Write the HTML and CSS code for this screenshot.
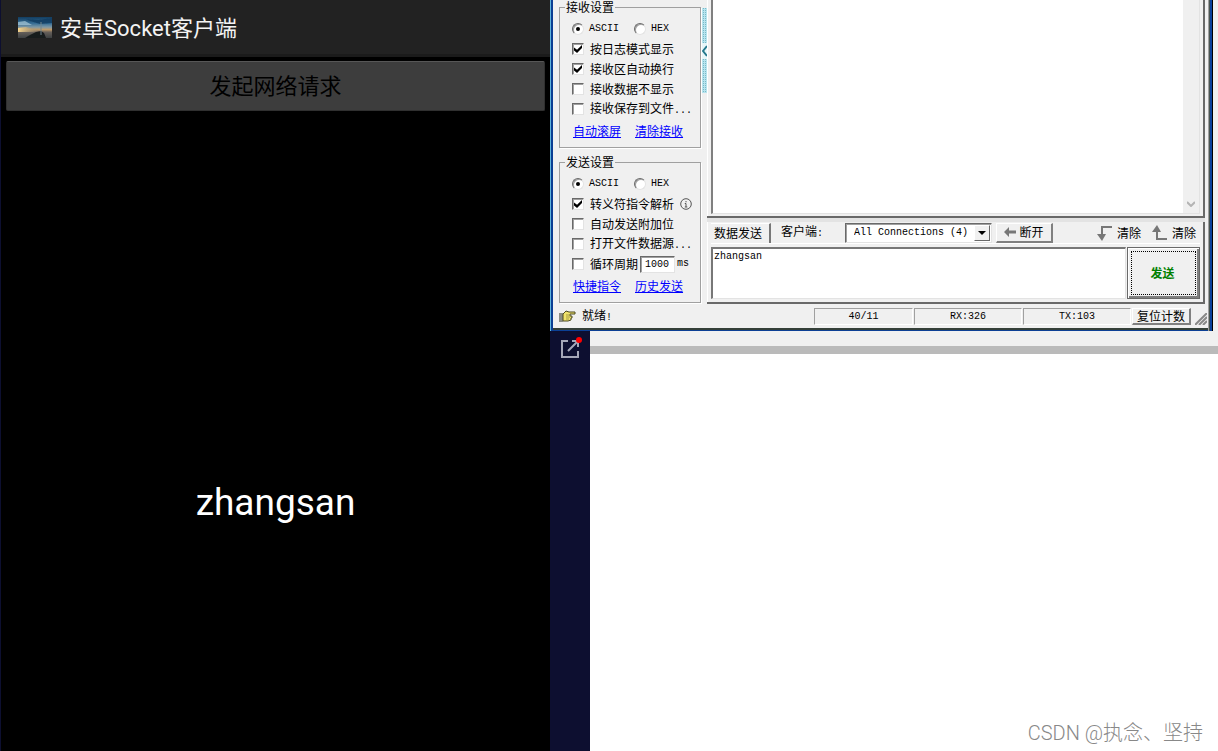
FILE: index.html
```html
<!DOCTYPE html>
<html lang="zh-CN">
<head>
<meta charset="utf-8">
<title>安卓Socket客户端</title>
<link rel="stylesheet" href="styles.css">
</head>
<body>
<div class="screen">
  <section class="phone">
    <header class="app-bar">
      <svg class="app-icon" viewBox="0 0 34 21" aria-hidden="true">
        <defs>
          <linearGradient id="sky" x1="0" y1="0" x2="0" y2="1">
            <stop offset="0" stop-color="#123d60"/><stop offset="0.3" stop-color="#356c94"/>
            <stop offset="0.48" stop-color="#7d98a6"/><stop offset="0.6" stop-color="#c09a68"/>
            <stop offset="0.72" stop-color="#66605a"/><stop offset="1" stop-color="#3c4042"/>
          </linearGradient>
          <linearGradient id="glow"><stop offset="0" stop-color="#f8d68e"/><stop offset="1" stop-color="#7b7468" stop-opacity=".2"/></linearGradient>
          <filter id="soft" x="0" y="0" width="1" height="1"><feGaussianBlur stdDeviation="0.7"/></filter>
        </defs>
        <rect width="34" height="21" fill="url(#sky)"/>
        <g filter="url(#soft)">
          <path d="M0 11 8 10 15 12 24 13 15 15 0 15z" fill="url(#glow)"/>
          <path d="M8 2 20 3 34 1v5L22 7 12 4z" fill="#123c60" opacity=".8"/>
          <path d="M0 5 7 4 14 8 6 8 0 8z" fill="#a9cbd9" opacity=".7"/>
          <path d="M7 21 12 18 18 15 23 14 26 16 28 21z" fill="#171a1c"/>
          <path d="M23 5v13" stroke="#70858c" fill="none"/>
        </g>
      </svg>
      <h1 class="app-title">安卓Socket客户端</h1>
    </header>
    <button class="request-button" type="button">发起网络请求</button>
    <p class="reply">zhangsan</p>
  </section>

  <div class="desktop">
    <div class="window-row">
      <main class="window">
        <div class="work">
          <aside class="settings">
            <fieldset class="group">
              <legend>接收设置</legend>
              <div class="radios">
                <label class="option mono"><input type="radio" name="rx" checked>ASCII</label>
                <label class="option mono"><input type="radio" name="rx">HEX</label>
              </div>
              <label class="option"><input type="checkbox" checked>按日志模式显示</label>
              <label class="option"><input type="checkbox" checked>接收区自动换行</label>
              <label class="option"><input type="checkbox">接收数据不显示</label>
              <label class="option"><input type="checkbox"><span>接收保存到文件<span class="mono">...</span></span></label>
              <div class="links"><a href="#">自动滚屏</a><a href="#">清除接收</a></div>
            </fieldset>
            <fieldset class="group">
              <legend>发送设置</legend>
              <div class="radios">
                <label class="option mono"><input type="radio" name="tx" checked>ASCII</label>
                <label class="option mono"><input type="radio" name="tx">HEX</label>
              </div>
              <label class="option"><input type="checkbox" checked>转义符指令解析
                <svg class="info" viewBox="0 0 12 12" aria-hidden="true"><circle cx="6" cy="6" r="5.3"/><path d="M6 3v1.3M4.8 5.5H6V9M4.8 9h2.5"/></svg>
              </label>
              <label class="option"><input type="checkbox">自动发送附加位</label>
              <label class="option"><input type="checkbox"><span>打开文件数据源<span class="mono">...</span></span></label>
              <div class="cycle">
                <label class="option"><input type="checkbox">循环周期</label>
                <input class="period mono" type="text" value="1000" aria-label="循环周期毫秒"><span class="mono">ms</span>
              </div>
              <div class="links"><a href="#">快捷指令</a><a href="#">历史发送</a></div>
            </fieldset>
          </aside>

          <button class="splitter" type="button" aria-label="收起">
            <span class="dots"></span>
            <svg viewBox="0 0 5 12" aria-hidden="true"><path d="M5 1 1 6l4 5"/></svg>
            <span class="dots"></span>
          </button>

          <div class="panels">
            <section class="receive">
              <div class="receive-box">
                <textarea class="log mono" aria-label="接收区"></textarea>
                <div class="scroll"><svg viewBox="0 0 8 6" aria-hidden="true"><path d="M0 1 4 5l4-4"/></svg></div>
              </div>
            </section>
            <section class="send">
              <div class="toolbar">
                <span class="tab">数据发送</span>
                <label class="client-label" for="client">客户端<span class="mono">:</span></label>
                <div class="combo">
                  <select id="client" class="mono"><option>All Connections (4)</option></select>
                  <span class="combo-arrow"></span>
                </div>
                <button class="raised disconnect" type="button"><svg viewBox="0 0 12 10" aria-hidden="true"><path d="M0 5 5 0v3.5h7v3H5V10z"/></svg>断开</button>
                <div class="clears">
                  <button class="flat" type="button"><svg viewBox="0 0 16 16" aria-hidden="true"><path class="stroke" d="M15 2H5v8"/><path d="M0 9h9l-4 7z"/></svg>清除</button>
                  <button class="flat" type="button"><svg viewBox="0 0 16 16" aria-hidden="true"><path class="stroke" d="M15 14H5V6"/><path d="M0 7h9L5 0z"/></svg>清除</button>
                </div>
              </div>
              <div class="compose">
                <textarea class="message mono" aria-label="发送内容">zhangsan</textarea>
                <button class="submit" type="button"><span>发送</span></button>
              </div>
            </section>
          </div>
        </div>
        <footer class="status">
          <svg class="hand" viewBox="0 0 17 12" aria-hidden="true"><path d="M0 3h4v9H0z" fill="#8b8d84"/><path d="M4 4 7 1l3 1h6v2h-5v2h2v2h-1v2l-3 1H4z" fill="#f1e36b" stroke="#4c4a23"/><path d="M7 5h4M7 7h4M7 9h3" stroke="#a59c45"/></svg>
          <span class="ready">就绪<span class="mono">!</span></span>
          <span class="cell mono">40/11</span>
          <span class="cell wide mono">RX:326</span>
          <span class="cell wide mono">TX:103</span>
          <button class="raised reset" type="button">复位计数</button>
          <svg class="grip" viewBox="0 0 12 12" aria-hidden="true"><path d="M0 12 12 0M4 12l8-8M8 12l4-4"/></svg>
        </footer>
      </main>
    </div>
    <div class="lower">
      <nav class="rail">
        <a href="#" aria-label="打开"><svg viewBox="0 0 22 22"><path d="M8 4H2v16h16v-6M12 4h5M18 5v5M8 14 18 4"/><circle cx="19" cy="3" r="3"/></svg></a>
      </nav>
      <div class="page"><p class="credit">CSDN @执念、坚持</p></div>
    </div>
  </div>
</div>
</body>
</html>
```

FILE: styles.css
```css
* { box-sizing: border-box; }
body { margin: 0; background: #fff; font-family: "Noto Sans CJK SC", sans-serif; font-size: 12px; line-height: 14px; color: #000; }
button, select, input, textarea { font: inherit; color: inherit; margin: 0; border-radius: 0; }
button { padding: 0; border: 0; background: none; }
.mono { font-family: "Liberation Mono", monospace; font-size: 10px; }
.screen { display: flex; min-height: 100vh; }

.phone { flex: 0 0 550px; display: flex; flex-direction: column; background: #000; border-left: 1px solid #0d0f30; font-family: Roboto, "Noto Sans CJK SC", sans-serif; }
.app-bar { display: flex; align-items: center; gap: 8px; height: 57px; padding-left: 17px; background: #222; border-bottom: 3px solid #1b1b1b; }
.app-icon { width: 34px; height: 21px; }
.app-title { margin: 0; padding-top: 3px; color: #f3f3f3; font-size: 22px; line-height: 32px; font-weight: 400; }
.request-button { height: 50px; margin: 4px 5px 0; padding-top: 1px; background: #3d3d3d; border: 1px solid #303030; border-top-color: #575757; border-radius: 2px; font-size: 22px; line-height: 32px; }
.reply { margin: 371px 0 0; color: #fff; font-size: 37px; line-height: 42px; text-align: center; }

.desktop { flex: 1; min-width: 640px; display: flex; flex-direction: column; }
.window-row { background: #f0f0f0; padding-right: 5px; box-shadow: inset 1px 0 #5fb4dc; }
.window { display: flex; flex-direction: column; margin-left: 1px; padding: 0 4px 6px 6px; background: #f0f0f0; border-left: 2px solid #0b3f94; border-right: 1px solid #000; box-shadow: inset -2px 0 #0b419c, inset -3px 0 #4a5551, inset -4px 0 #a0a0a0, inset 0 -1px #0b3f94, inset 0 -3px #354039; }
.work { display: flex; padding-right: 3px; }

.settings { flex: 0 0 143px; display: flex; flex-direction: column; gap: 6px; padding-right: 1px; }
.group { min-width: 0; margin: 0; padding: 5px 0 4px 12px; border: 1px solid #a0a0a0; box-shadow: 1px 1px #fff; }
.group + .group { margin-top: 1px; }
.group legend { margin-left: -7px; padding: 0 1px; background: #f0f0f0; }
.option { display: flex; align-items: center; gap: 6px; height: 20px; white-space: nowrap; }
.radios { display: flex; gap: 15px; }
.radios .option { gap: 5px; }
.option input { appearance: none; flex: none; width: 12px; height: 12px; background: #fff; border: 1px solid; border-color: #696969 #e3e3e3 #e3e3e3 #696969; box-shadow: inset 1px 1px #a0a0a0; display: grid; place-items: center; }
.option input[type=radio] { border-radius: 50%; }
.option input[type=radio]:checked::after { content: ""; width: 4px; height: 4px; border-radius: 50%; background: #000; }
.option input[type=checkbox]:checked::after { content: ""; width: 8px; height: 8px; background: #000; clip-path: polygon(0 30%, 38% 60%, 100% 0, 100% 38%, 38% 100%, 0 68%); }
.info { width: 12px; height: 12px; fill: none; stroke: #555; }
.cycle { display: flex; align-items: center; height: 20px; }
.period { width: 35px; height: 17px; margin: 0 2px; padding: 0 4px; background: #fff; border: 1px solid; border-color: #696969 #e3e3e3 #e3e3e3 #696969; box-shadow: inset 1px 1px #a0a0a0; }
.links { display: flex; align-items: center; gap: 14px; height: 24px; padding-left: 1px; }
.links a { color: #00f; text-decoration: underline; }

.splitter { flex: 0 0 5px; height: 85px; margin-top: 8px; display: flex; flex-direction: column; background: #e6f6f9; }
.splitter svg { width: 5px; height: 14px; margin: 1px 0; fill: none; stroke: #23788c; stroke-width: 2; }
.dots { flex: 1; background: conic-gradient(#79b9c8 25%, #b8e4ee 0) 0 0 / 2px 2px; }

.panels { flex: 1; min-width: 0; display: flex; flex-direction: column; background: #e3e3e3; gap: 4px; }
.receive, .send { background: #f0f0f0; border: solid #696969; border-width: 0 2px 2px 0; box-shadow: inset 1px 0 #fff; padding: 0 3px 2px 4px; }
.send { padding-bottom: 3px; }
.receive-box { display: flex; height: 214px; border: 1px solid #e3e3e3; border-top: 0; border-left: 2px solid #808080; background: #fff; }
.log { flex: 1; min-width: 0; border: 0; padding: 2px; resize: none; background: #fff; }
.scroll { flex: 0 0 16px; display: flex; align-items: flex-end; justify-content: center; padding-bottom: 6px; background: #f0f0f0; }
.scroll svg { width: 8px; height: 6px; fill: none; stroke: #b4b4b4; stroke-width: 2; }
.toolbar { display: flex; align-items: center; height: 21px; }
.tab { flex: 0 0 60px; height: 20px; padding: 2px 0 0 3px; border-top: 1px solid #fff; border-right: 2px solid #777; }
.client-label { flex: 0 0 74px; padding-left: 10px; }
.combo { position: relative; flex: 0 0 147px; height: 20px; }
.combo select { appearance: none; display: block; width: 100%; height: 100%; padding: 0 0 0 8px; background: #fff; border: 1px solid; border-color: #696969 #e3e3e3 #e3e3e3 #696969; box-shadow: inset 1px 1px #a0a0a0; }
.combo-arrow { position: absolute; top: 2px; right: 2px; bottom: 2px; width: 16px; display: grid; place-items: center; background: #f0f0f0; border: 1px solid; border-color: #fff #696969 #696969 #fff; pointer-events: none; }
.combo-arrow::after { content: ""; border: 4px solid transparent; border-top-color: #000; border-bottom: 0; }
.raised { background: #f0f0f0; border: solid; border-width: 1px 2px 2px 1px; border-color: #fff #808080 #808080 #fff; white-space: nowrap; }
.toolbar svg { fill: #777; }
.disconnect { display: flex; align-items: center; justify-content: center; gap: 3px; width: 57px; height: 20px; margin-left: 4px; }
.disconnect svg { width: 12px; height: 10px; }
.clears { display: flex; gap: 11px; margin-left: auto; padding-right: 4px; }
.flat { display: flex; align-items: center; gap: 4px; }
.flat svg { width: 16px; height: 16px; }
.flat .stroke { fill: none; stroke: #777; stroke-width: 2; }
.compose { display: flex; gap: 1px; height: 56px; padding-top: 3px; border-top: 1px solid #fff; }
.message { flex: 1; min-width: 0; padding: 2px 2px 0 1px; line-height: 12px; resize: none; background: #fff; border: 1px solid; border-width: 2px 1px 1px 2px; border-color: #777 #e3e3e3 #e3e3e3 #777; }
.submit { flex: 0 0 73px; padding: 3px; border: 1px solid #696969; box-shadow: inset 1px 1px #fff, inset -2px -2px #808080; color: #008000; font-weight: 700; }
.submit span { display: grid; place-items: center; height: 100%; padding-right: 2px; border: 1px dotted #000; }

.status { display: flex; align-items: center; gap: 1px; height: 18px; margin-top: 3px; }
.hand { width: 17px; height: 12px; }
.ready { flex: 1; padding-left: 5px; }
.cell { flex: 0 0 99px; height: 17px; line-height: 15px; text-align: center; border: 1px solid; border-color: #a0a0a0 #fff #fff #a0a0a0; }
.cell.wide { flex-basis: 108px; }
.reset { flex: 0 0 59px; height: 17px; line-height: 14px; }
.grip { width: 12px; height: 12px; margin: 6px 1px 0 3px; stroke: #888; stroke-width: 2; }

.lower { flex: 1; display: flex; }
.rail { flex: 0 0 40px; background: #0d0f30; padding: 6px 0 0 10px; }
.rail svg { display: block; width: 22px; height: 22px; fill: none; stroke: #a5a7b8; stroke-width: 2; }
.rail circle { fill: #f00; stroke: none; }
.page { flex: 1; display: flex; align-items: flex-end; justify-content: flex-end; background: linear-gradient(#f0f0f0 15px, #bababa 15px 23px, #fff 23px); }
.credit { margin: 0 15px 4px 0; font: 300 20px/28px Roboto, "Noto Sans CJK SC", sans-serif; color: #888; }
```
